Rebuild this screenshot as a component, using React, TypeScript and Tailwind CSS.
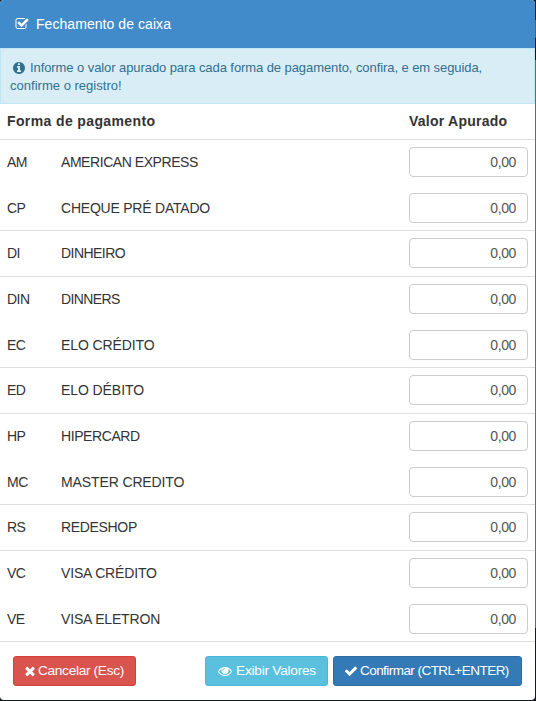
import { useState } from 'react'
import type { ReactNode } from 'react'

interface PaymentMethod {
  code: string
  name: string
  // Row height plus separator; the table height is shared out in whole pixels.
  row: string
  tracking: string
}

const METHODS: PaymentMethod[] = [
  { code: 'AM', name: 'AMERICAN EXPRESS', row: 'h-[46px] border-transparent', tracking: 'tracking-[-0.44px]' },
  { code: 'CP', name: 'CHEQUE PRÉ DATADO', row: 'h-[45px] border-[#ddd]', tracking: 'tracking-[-0.22px]' },
  { code: 'DI', name: 'DINHEIRO', row: 'h-[46px] border-[#ddd]', tracking: 'tracking-[-0.55px]' },
  { code: 'DIN', name: 'DINNERS', row: 'h-[46px] border-transparent', tracking: 'tracking-[-0.6px]' },
  { code: 'EC', name: 'ELO CRÉDITO', row: 'h-[45px] border-[#ddd]', tracking: 'tracking-[-0.1px]' },
  { code: 'ED', name: 'ELO DÉBITO', row: 'h-[46px] border-[#ddd]', tracking: 'tracking-[-0.08px]' },
  { code: 'HP', name: 'HIPERCARD', row: 'h-[46px] border-transparent', tracking: 'tracking-[-0.42px]' },
  { code: 'MC', name: 'MASTER CREDITO', row: 'h-[45px] border-[#ddd]', tracking: 'tracking-[-0.12px]' },
  { code: 'RS', name: 'REDESHOP', row: 'h-[46px] border-[#ddd]', tracking: 'tracking-[-0.33px]' },
  { code: 'VC', name: 'VISA CRÉDITO', row: 'h-[46px] border-transparent', tracking: 'tracking-[-0.17px]' },
  { code: 'VE', name: 'VISA ELETRON', row: 'h-[45px] border-[#ddd]', tracking: 'tracking-[-0.17px]' },
]

const ICONS = {
  checkSquare:
    'M1472 930v318q0 119-84.5 203.5t-203.5 84.5h-832q-119 0-203.5-84.5t-84.5-203.5v-832q0-119 84.5-203.5t203.5-84.5h832q63 0 117 25 15 7 18 23 3 17-9 29l-49 49q-10 10-23 10-3 0-9-2-23-6-45-6h-832q-66 0-113 47t-47 113v832q0 66 47 113t113 47h832q66 0 113-47t47-113v-254q0-13 9-22l64-64q10-10 23-10 6 0 12 3 20 8 20 29zm231-489l-814 814q-24 24-57 24t-57-24l-430-430q-24-24-24-57t24-57l110-110q24-24 57-24t57 24l263 263 647-647q24-24 57-24t57 24l110 110q24 24 24 57t-24 57z',
  info: 'M1152 1376v-160q0-14-9-23t-23-9h-96v-512q0-14-9-23t-23-9h-320q-14 0-23 9t-9 23v160q0 14 9 23t23 9h96v320h-96q-14 0-23 9t-9 23v160q0 14 9 23t23 9h448q14 0 23-9t9-23zm-128-896v-160q0-14-9-23t-23-9h-192q-14 0-23 9t-9 23v160q0 14 9 23t23 9h192q14 0 23-9t9-23zm640 416q0 209-103 385.5t-279.5 279.5-385.5 103-385.5-103-279.5-279.5-103-385.5 103-385.5 279.5-279.5 385.5-103 385.5 103 279.5 279.5 103 385.5z',
  times:
    'M1490 1322q0 40-28 68l-136 136q-28 28-68 28t-68-28l-294-294-294 294q-28 28-68 28t-68-28l-136-136q-28-28-28-68t28-68l294-294-294-294q-28-28-28-68t28-68l136-136q28-28 68-28t68 28l294 294 294-294q28-28 68-28t68 28l136 136q28 28 28 68t-28 68l-294 294 294 294q28 28 28 68z',
  eye: 'M1664 960q-152-236-381-353 61 104 61 225 0 185-131.5 316.5t-316.5 131.5-316.5-131.5-131.5-316.5q0-121 61-225-229 117-381 353 133 205 333.5 326.5t434.5 121.5 434.5-121.5 333.5-326.5zm-720-384q0-20-14-34t-34-14q-125 0-214.5 89.5t-89.5 214.5q0 20 14 34t34 14 34-14 14-34q0-86 61-147t147-61q20 0 34-14t14-34zm848 384q0 34-20 69-140 230-376.5 368.5t-499.5 138.5-499.5-139-376.5-368q-20-35-20-69t20-69q140-229 376.5-368t499.5-139 499.5 139 376.5 368q20 35 20 69z',
  check:
    'M1671 566q0 40-28 68l-724 724-136 136q-28 28-68 28t-68-28l-136-136-362-362q-28-28-28-68t28-68l136-136q28-28 68-28t68 28l294 295 656-657q28-28 68-28t68 28l136 136q28 28 28 68z',
}

function Icon({ name, className }: { name: keyof typeof ICONS; className: string }) {
  return (
    <svg viewBox="0 0 1792 1792" fill="currentColor" aria-hidden="true" className={className}>
      <path d={ICONS[name]} />
    </svg>
  )
}

function FooterButton({ className, children }: { className: string; children: ReactNode }) {
  return (
    <button
      type="button"
      className={`flex h-[30px] items-center whitespace-nowrap rounded-[3px] border leading-5 text-white ${className}`}
    >
      {children}
    </button>
  )
}

function PaymentRow({ method }: { method: PaymentMethod }) {
  const [value, setValue] = useState('0,00')

  return (
    <li className={`flex items-start border-b px-[7px] pt-[7px] text-[14px] ${method.row}`}>
      <span className="w-[54px] leading-[31px] tracking-[-0.5px]">{method.code}</span>
      <span className={`flex-1 leading-[31px] ${method.tracking}`}>{method.name}</span>
      <input
        value={value}
        onChange={(e) => setValue(e.target.value)}
        aria-label={method.name}
        className="h-[30px] w-[119px] rounded-[4px] border border-[#ccc] bg-white pr-[11px] text-right tracking-[-0.4px] text-[#555]"
      />
    </li>
  )
}

export default function App() {
  return (
    <div className="flex h-[701px] w-[536px] items-start bg-[#141a24] font-['Liberation_Sans',Arial,sans-serif] text-[#333]">
      <div className="flex h-[700px] w-[535px] flex-col overflow-hidden rounded-[4px] bg-white">
        <header className="flex h-12 shrink-0 items-center bg-[#428bca] pl-[15px] text-white">
          <Icon name="checkSquare" className="size-[14px]" />
          <h1 className="pl-[7px] text-[14px] leading-5 tracking-[0.06px]">Fechamento de caixa</h1>
        </header>

        <div className="h-14 shrink-0 border border-[#bce8f1] bg-[#d9edf7] pl-[9px] pt-[10px] text-[13px] leading-[18px] tracking-[-0.08px] text-[#31708f]">
          <p className="flex items-center whitespace-nowrap">
            <Icon name="info" className="ml-[2px] mr-1 size-[14px]" />
            Informe o valor apurado para cada forma de pagamento, confira, e em seguida,
          </p>
          <p className="tracking-[0.02px]">confirme o registro!</p>
        </div>

        <div className="flex h-9 shrink-0 border-b border-[#ddd] pl-[7px] text-[14px] font-bold leading-[34px]">
          <span className="w-[402px] tracking-[0.38px]">Forma de pagamento</span>
          <span className="tracking-[0.25px]">Valor Apurado</span>
        </div>

        <ul>
          {METHODS.map((method) => (
            <PaymentRow key={method.code} method={method} />
          ))}
        </ul>

        <footer className="flex items-start gap-[5px] px-[13px] pt-[14px]">
          <FooterButton className="mr-auto w-[123px] border-[#d43f3a] bg-[#d9534f] pl-[9px] text-[13.7px] tracking-[-0.33px]">
            <Icon name="times" className="mr-px size-[14px]" />
            Cancelar (Esc)
          </FooterButton>
          <FooterButton className="w-[123px] border-[#46b8da] bg-[#5bc0de] pl-[12px] text-[13.7px] tracking-[-0.25px]">
            <Icon name="eye" className="mr-1 size-[14px]" />
            Exibir Valores
          </FooterButton>
          <FooterButton className="w-[189px] border-[#2e6da4] bg-[#337ab7] pl-[10px] text-[13.5px] tracking-[-0.55px]">
            <Icon name="check" className="mr-[2px] size-[14px]" />
            Confirmar (CTRL+ENTER)
          </FooterButton>
        </footer>
      </div>

      {/* Sliver of the dimmed page beside the dialog */}
      <div className="flex w-px flex-col">
        <div className="h-5 bg-[#06213a]" />
        <div className="h-[18px] bg-[#5a6066]" />
        <div className="h-[22px] bg-[#0c1420]" />
        <div className="h-[568px] bg-[#6a6a6c]" />
      </div>
    </div>
  )
}
